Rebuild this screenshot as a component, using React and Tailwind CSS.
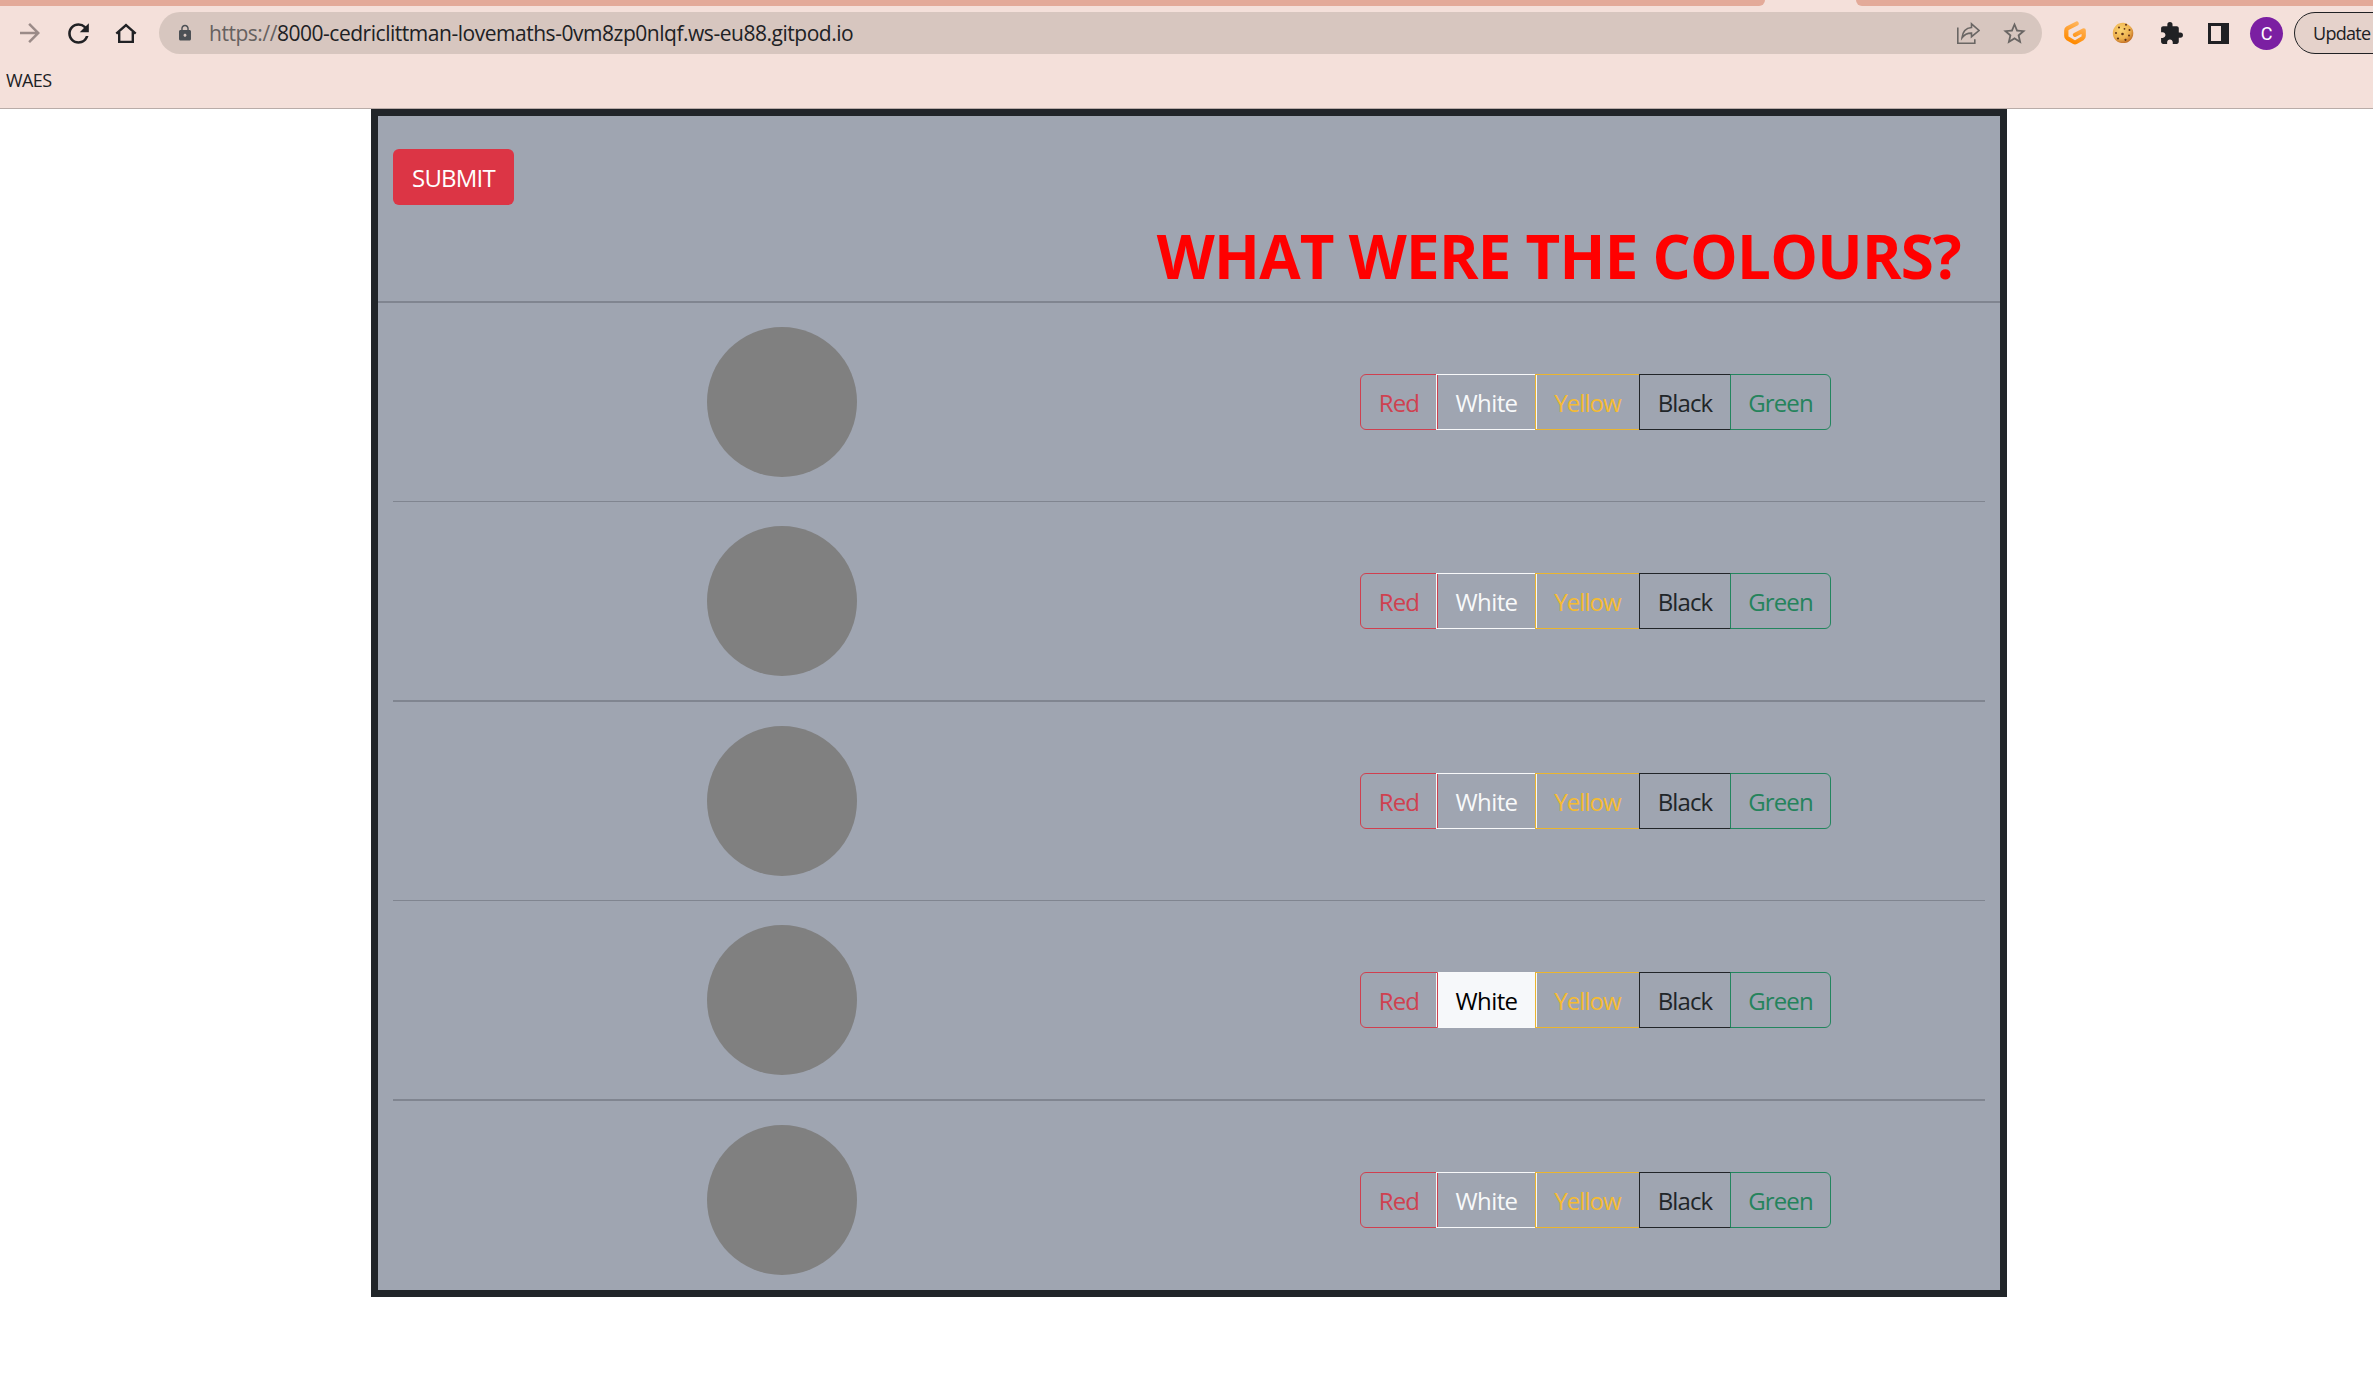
import React from "react";
import { MdArrowForward, MdRefresh, MdLock, MdStarBorder, MdExtension } from "react-icons/md";

function HomeIcon() {
  return (
    <svg className="ml-[21px] h-[22px] w-[22px] shrink-0" viewBox="0 0 22 22" fill="none" stroke="#202124" strokeWidth="2.4">
      <path d="M4.2 10v9.9h13.6V10" />
      <path d="M1.3 11.7 11 3l9.7 8.7" />
    </svg>
  );
}

function ShareIcon() {
  return (
    <svg className="h-6 w-6 shrink-0" viewBox="0 0 24 24" fill="none" stroke="#6a6664" strokeWidth="1.6">
      <path d="M1.8 6.5v15.7h17v-4" />
      <path d="M15.5 2.8 23 9.5l-7.500 6.200v-3.600C11 12 8.500 13.300 6 16.800 6.600 11 10 7 15.500 6.500z" />
    </svg>
  );
}

function GitpodIcon() {
  return (
    <svg className="h-6 w-[22px] shrink-0" viewBox="0 0 22 24" fill="none">
      <defs>
        <linearGradient id="gitpod" x1="0.7" y1="0" x2="0.3" y2="1">
          <stop offset="0" stopColor="#ffb45b" />
          <stop offset="1" stopColor="#ff8a00" />
        </linearGradient>
      </defs>
      <path
        d="M12.600 2.600 3.700 7.200Q2.300 8 2.300 9.500v5.600q0 1.500 1.300 2.300l6.200 3.600q1.200.7 2.400 0l6.200-3.600q1.300-.8 1.300-2.300V9.300L11 13.800"
        stroke="url(#gitpod)"
        strokeWidth="4.300"
        strokeLinecap="round"
        strokeLinejoin="round"
      />
    </svg>
  );
}

function CookieIcon() {
  return (
    <svg className="ml-[26px] h-[22px] w-[22px] shrink-0" viewBox="0 0 22 22">
      <defs>
        <radialGradient id="cookie" cx="0.4" cy="0.35" r="0.7">
          <stop offset="0" stopColor="#fbd472" />
          <stop offset="0.65" stopColor="#edb04e" />
          <stop offset="1" stopColor="#bd671f" />
        </radialGradient>
      </defs>
      <path d="M11 .8c3 0 4 1 6 2.400C19.500 5 21.300 7.500 21.300 11s-1.300 6-3.800 8-4 2-6.500 2-5-.5-7-2.500S.8 14 .8 11s1-5 3-7.200S8 .8 11 .8z" fill="url(#cookie)" />
      <g fill="#5d2f14">
        <circle cx="7" cy="5.500" r="1" />
        <circle cx="14" cy="2.800" r="1" />
        <circle cx="12.500" cy="6.800" r="0.900" />
        <circle cx="17.500" cy="8" r="1" />
        <circle cx="4" cy="11" r="1" />
        <circle cx="10.500" cy="12" r="1.300" />
        <circle cx="17" cy="13.500" r="1" />
        <circle cx="6" cy="16.500" r="1.100" />
        <circle cx="13.500" cy="17.800" r="1.100" />
      </g>
    </svg>
  );
}

function BrowserChrome() {
  return (
    <header className="h-[109px] overflow-hidden border-b border-[#b9aca8] bg-[#f4e0da] text-[#202124]">
      <div className="flex h-1.5 justify-between">
        <div className="w-[1765px] rounded-br-lg bg-[#e3aa99]" />
        <div className="w-[517px] rounded-bl-lg bg-[#e3aa99]" />
      </div>
      <div className="mt-1.5 flex h-[42px] w-[2500px] items-center">
        <MdArrowForward className="ml-[15px] h-[30px] w-[30px] shrink-0 text-[#9b8b88]" />
        <MdRefresh className="ml-[18px] h-[31px] w-[31px] shrink-0" />
        <HomeIcon />
        <div className="ml-[22px] flex h-[42px] w-[1883px] shrink-0 items-center rounded-full bg-[#d7c6bf]">
          <MdLock className="ml-[17px] h-[18px] w-[18px] shrink-0 text-[#4c5055]" />
          <div className="ml-[15px] pt-0.5 whitespace-nowrap text-[21px] tracking-[-0.47px]">
            <span className="text-[#66615f]">https://</span>
            <span>8000-cedriclittman-lovemaths-0vm8zp0nlqf.ws-eu88.gitpod.io</span>
          </div>
          <div className="mr-[14px] ml-auto flex items-center gap-[21px]">
            <ShareIcon />
            <MdStarBorder className="h-[27px] w-[27px] text-[#6a6664]" />
          </div>
        </div>
        <div className="ml-[22px] flex items-center">
          <GitpodIcon />
          <CookieIcon />
          <MdExtension className="ml-[25px] h-[25px] w-[25px] shrink-0" />
          <div className="ml-[24px] h-[21px] w-[21px] shrink-0 border-[3px] border-r-[8px] border-[#202124]" />
          <div className="ml-[21px] flex h-[33px] w-[33px] shrink-0 items-center justify-center rounded-full bg-[#7b1fa2] font-[Roboto] text-[18px] text-white">
            C
          </div>
          <div className="ml-[11px] flex h-[42px] w-[150px] shrink-0 items-center rounded-full border-[1.5px] border-[#202124] bg-[#e5d2cb] pl-[18px] text-[18px] tracking-[-0.7px]">
            Update
          </div>
        </div>
      </div>
      <div className="mt-[14px] ml-[6px] text-[18px] leading-6 tracking-[-0.6px]">WAES</div>
    </header>
  );
}

const groupButton = "flex h-14 items-center justify-center border pt-0.5";

function ColourButtons({ whiteActive }) {
  return (
    <div className="flex h-14 w-[471px] text-[24px]">
      <div
        className={`${groupButton} w-[78px] rounded-l-md border-[#cf404f] text-[#cf4150] tracking-[-0.9px] ${
          whiteActive ? "z-10" : ""
        }`}
      >
        Red
      </div>
      <div
        className={`${groupButton} -ml-0.5 w-[101px] border-[#f8f9fa] tracking-[-0.6px] ${
          whiteActive ? "bg-[#f6f8fa] text-black" : "text-[#f8f9fa]"
        }`}
      >
        White
      </div>
      <div className={`${groupButton} -ml-0.5 w-[105px] border-[#eab52f] text-[#f5bb33] tracking-[-0.9px]`}>Yellow</div>
      <div className={`${groupButton} -ml-px w-[92px] border-[#212529] text-[#212529] tracking-[-0.9px]`}>Black</div>
      <div className={`${groupButton} -ml-px w-[101px] rounded-r-md border-[#23855e] text-[#25835c] tracking-[-0.9px]`}>Green</div>
    </div>
  );
}

function Row({ whiteActive }) {
  return (
    <div className="flex h-[150px] items-center">
      <div className="ml-[314px] h-[150px] w-[150px] rounded-full bg-[#808080]" />
      <div className="ml-[503px]">
        <ColourButtons whiteActive={whiteActive} />
      </div>
    </div>
  );
}

export default function App() {
  return (
    <div className="h-[1386px] w-[2373px] overflow-hidden bg-white font-['Open_Sans','Noto_Sans',sans-serif]">
      <BrowserChrome />
      <main className="ml-[371px] h-[1188px] w-[1636px] border-[7px] border-[#212529] bg-[#9fa5b1]">
        <div className="h-[185px] overflow-hidden pt-[33px] pr-[39px] pl-[15px]">
          <button className="flex h-14 w-[121px] items-center justify-center rounded-md bg-[#dc3545] pt-0.5 text-[24px] tracking-[-0.8px] text-white">
            SUBMIT
          </button>
          <h1 className="mt-[15px] text-right text-[60px] leading-[72px] font-bold tracking-[-0.72px] whitespace-nowrap text-[#ff0000]">
            WHAT WERE THE COLOURS?
          </h1>
        </div>
        <div className="h-0.5 bg-[#808590]" />
        <div className="px-[15px] pt-6">
          <Row />
          <div className="my-6 h-px bg-[#808590]" />
          <Row />
          <div className="my-6 h-0.5 bg-[#808590]" />
          <Row />
          <div className="my-6 h-px bg-[#808590]" />
          <Row whiteActive />
          <div className="my-6 h-0.5 bg-[#808590]" />
          <Row />
        </div>
      </main>
    </div>
  );
}
